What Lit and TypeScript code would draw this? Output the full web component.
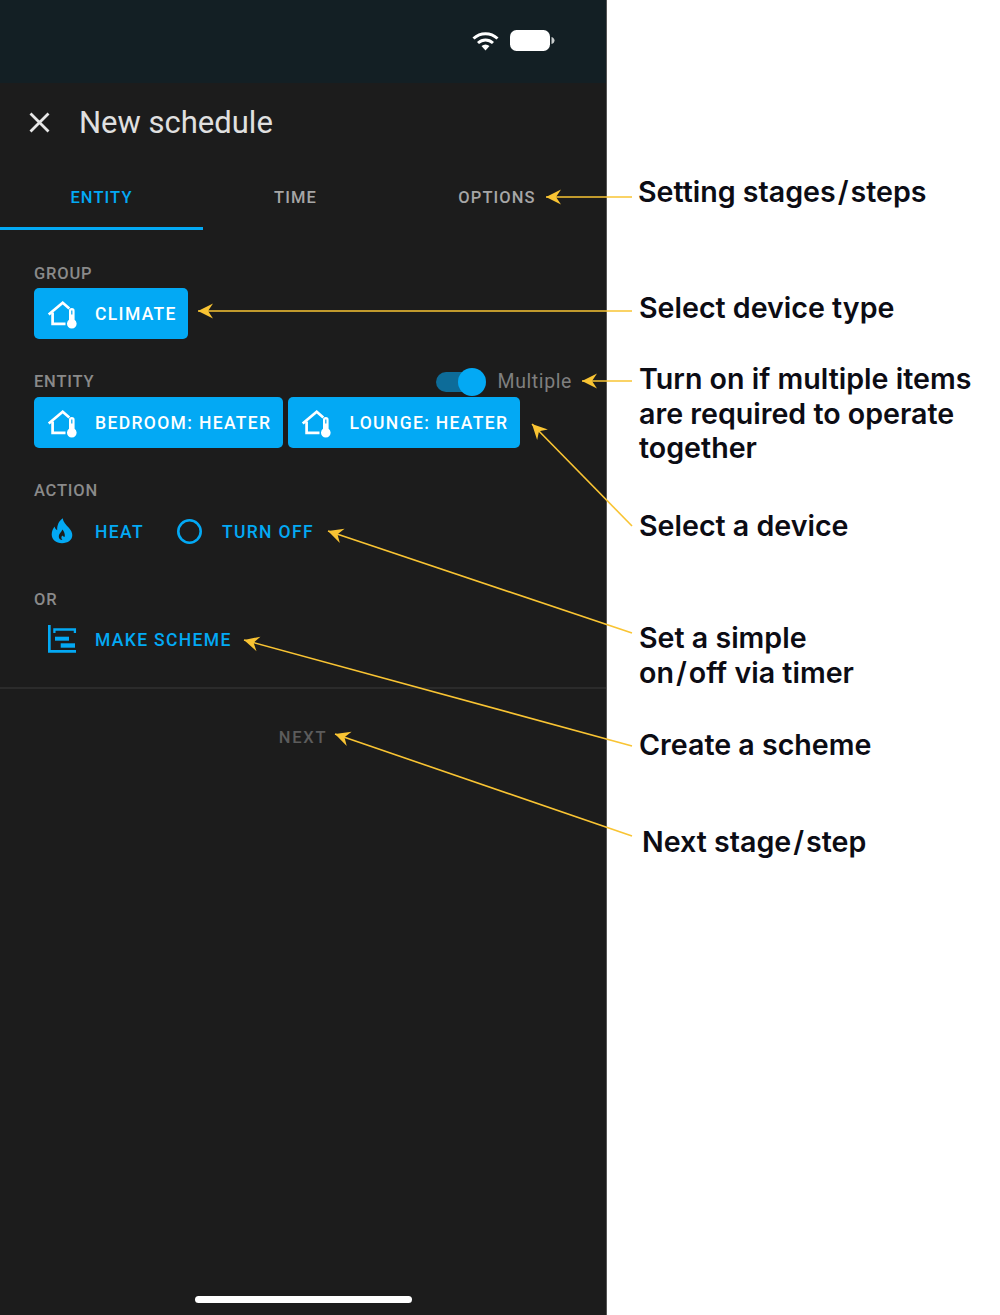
import { LitElement, html, css, svg } from 'lit';
import { customElement } from 'lit/decorators.js';

const climateIcon = svg`
  <path d="M2.7 16.5 L16.7 4.7 L23.3 10.4" fill="none" stroke="#fff" stroke-width="2.7"/>
  <path d="M6.6 14.5 V25.8 H19.5" fill="none" stroke="#fff" stroke-width="2.7"/>
  <path d="M23 21.8 V12.8 a2.8 2.8 0 0 1 5.6 0 V21.8 a4.8 4.8 0 1 1 -5.6 0 Z" fill="#fff"/>
  <rect x="25.2" y="12.5" width="1.2" height="4" fill="#03a9f4"/>
`;

const fireIcon = svg`
  <path fill-rule="evenodd" fill="#03a9f4" d="M16.7 2.2 C17.2 6.2 20 8.6 22.6 11.4 C25 14 26.3 16.4 26.3 19 C26.3 24 22 27.2 16 27.2 C10 27.2 5.7 23.6 5.7 18.6 C5.7 15.4 7 12.6 8.6 10.6 C8.9 12.4 9.8 13.6 11.2 14.2 C11 9.6 12.6 5 16.7 2.2 Z M16.4 13.6 C15.6 16 13 17.4 12.8 20 C12.6 22.4 14.2 24 16.4 24 C15 22.6 15 21 16.4 19.6 C17 20.6 18 21 18.8 20.8 C19.2 18 18 15.4 16.4 13.6 Z"/>
`;

const schemeIcon = svg`
  <path fill="#03a9f4" d="M2 1 H4.7 V26 H30 V28.7 H2 Z"/>
  <path fill="none" stroke="#03a9f4" stroke-width="2.3" d="M8.4 9 V5.5 H28.9 V9"/>
  <rect x="9" y="12.7" width="14" height="4" fill="#03a9f4"/>
  <rect x="14.7" y="19.3" width="14.3" height="4.4" fill="#03a9f4"/>
`;

const offIcon = svg`<circle cx="16.5" cy="15.5" r="11.2" fill="none" stroke="#03a9f4" stroke-width="2.6"/>`;

// from -> to, the head sits on the "to" end
const arrows = [
  [632, 197, 546, 197],
  [632, 311, 198, 311],
  [632, 381, 582, 381],
  [632, 526, 532, 424],
  [632, 633, 328, 531],
  [632, 746, 244, 640],
  [632, 836, 335, 734],
];

const callouts = [
  { x: 31, y: 175, lines: ['Setting stages/steps'] },
  { x: 32, y: 291, lines: ['Select device type'] },
  { x: 32, y: 362, lines: ['Turn on if multiple items', 'are required to operate', 'together'] },
  { x: 32, y: 509, lines: ['Select a device'] },
  { x: 32, y: 621, lines: ['Set a simple', 'on/off via timer'] },
  { x: 32, y: 728, lines: ['Create a scheme'] },
  { x: 35, y: 825, lines: ['Next stage/step'] },
];

function arrowHead(x1: number, y1: number, x2: number, y2: number) {
  const len = Math.hypot(x1 - x2, y1 - y2);
  const ux = (x1 - x2) / len;
  const uy = (y1 - y2) / len;
  const px = -uy;
  const py = ux;
  const pts = [
    [x2, y2],
    [x2 + ux * 15 + px * 7.5, y2 + uy * 15 + py * 7.5],
    [x2 + ux * 10, y2 + uy * 10],
    [x2 + ux * 15 - px * 7.5, y2 + uy * 15 - py * 7.5],
  ];
  return pts.map((p) => p.join(',')).join(' ');
}

@customElement('app-root')
export class AppRoot extends LitElement {
  static styles = css`
    :host {
      display: flex;
      position: relative;
      width: 1000px;
      height: 1315px;
      background: #fff;
      font-family: Roboto, sans-serif;
      overflow: hidden;
    }

    .phone {
      width: 607px;
      height: 1315px;
      background: #1c1c1c;
      display: flex;
      flex-direction: column;
      flex: none;
      border-right: 1px solid #555;
      box-sizing: border-box;
    }

    .status {
      height: 83px;
      background: #131f24;
      display: flex;
      align-items: center;
      justify-content: flex-end;
      gap: 11px;
      padding: 0 51px 2px 0;
      box-sizing: border-box;
      flex: none;
    }

    .status svg {
      display: block;
    }

    .title-bar {
      height: 79px;
      display: flex;
      align-items: center;
      padding-left: 27px;
      color: #e0e0e0;
      font-size: 31px;
      flex: none;
    }

    .title-bar svg {
      width: 25px;
      height: 25px;
      margin-right: 27px;
    }

    .tabs {
      display: grid;
      grid-template-columns: 203px 185px 1fr;
      height: 68px;
      flex: none;
    }

    .tab {
      display: flex;
      align-items: center;
      justify-content: center;
      color: #a6a6a6;
      font-size: 16.5px;
      font-weight: 500;
      letter-spacing: 1.1px;
      padding-top: 2px;
    }

    .tab.active {
      color: #03a9f4;
      box-shadow: inset 0 -3px 0 #03a9f4;
    }

    .content {
      padding: 33.3px 0 0 34px;
    }

    .section {
      margin-bottom: 33px;
    }

    .section-head {
      display: flex;
      align-items: center;
      justify-content: space-between;
      height: 20px;
      margin-bottom: 5px;
      padding-right: 34px;
    }

    .label {
      color: #8a8a8a;
      font-size: 16.5px;
      font-weight: 500;
      letter-spacing: 0.8px;
    }

    .multiple {
      display: flex;
      align-items: center;
      color: #7f7f7f;
      font-size: 19.5px;
      letter-spacing: 0.6px;
    }

    .multiple span {
      margin-bottom: 1px;
    }

    .toggle {
      position: relative;
      width: 42px;
      height: 20px;
      border-radius: 10px;
      background: #0d6c99;
      margin-right: 20px;
    }

    .knob {
      position: absolute;
      right: -8px;
      top: -4px;
      width: 28px;
      height: 28px;
      border-radius: 50%;
      background: #03a9f4;
    }

    .row {
      display: flex;
      gap: 5.5px;
    }

    .btn {
      display: flex;
      align-items: center;
      height: 50.7px;
      padding: 1px 11.5px 0 12px;
      border-radius: 5px;
      box-sizing: border-box;
      font-size: 17.5px;
      font-weight: 500;
      letter-spacing: 1.35px;
      color: #03a9f4;
    }

    .btn.on {
      background: #03a9f4;
      color: #fff;
    }

    .btn svg {
      width: 32px;
      height: 32px;
      margin-right: 17px;
      flex: none;
    }

    .divider {
      height: 2px;
      background: #2b2b2b;
      margin-top: -11px;
      flex: none;
    }

    .next {
      text-align: center;
      margin-top: 39px;
      color: #5c5c5c;
      font-size: 16.5px;
      font-weight: 500;
      letter-spacing: 1.7px;
      line-height: 20px;
    }

    .home-bar {
      margin: auto auto 12px;
      width: 217px;
      height: 7px;
      border-radius: 4px;
      background: #fff;
    }

    .notes {
      position: relative;
      flex: 1;
    }

    .note {
      position: absolute;
      font-family: Inter, sans-serif;
      font-size: 28.6px;
      font-weight: 600;
      line-height: 34.5px;
      color: #0c0c14;
      white-space: nowrap;
    }

    .slash {
      margin: 0 2px;
    }

    .arrows {
      position: absolute;
      left: 0;
      top: 0;
      pointer-events: none;
    }
  `;

  private icon(body: unknown) {
    return html`<svg viewBox="0 0 32 32">${body}</svg>`;
  }

  // the slash in the callout font is wider than Inter's
  private noteLine(line: string) {
    const parts = line.split('/');
    if (parts.length === 1) return html`<div>${line}</div>`;
    return html`<div>${parts[0]}<span class="slash">/</span>${parts[1]}</div>`;
  }

  render() {
    return html`
      <div class="phone">
        <div class="status">
          <svg width="27" height="20" viewBox="0 0 27 20">
            <path d="M1.5 7.5 C8.5 1 18.5 1 25.5 7.5" fill="none" stroke="#fff" stroke-width="3"/>
            <path d="M6 12 C10.5 8 16.5 8 21 12" fill="none" stroke="#fff" stroke-width="3"/>
            <path d="M9.5 15 C12 13 15 13 17.5 15 L13.5 19.5 Z" fill="#fff"/>
          </svg>
          <svg width="45" height="21" viewBox="0 0 45 21">
            <rect x="0" y="0" width="40" height="21" rx="6.5" fill="#fff"/>
            <path d="M41.5 7 C43.5 7.5 44.5 9 44.5 10.5 C44.5 12 43.5 13.5 41.5 14 Z" fill="#c8cccd"/>
          </svg>
        </div>

        <div class="title-bar">
          <svg viewBox="0 0 25 25">
            <path d="M3.5 3.5 L21.5 21.5 M21.5 3.5 L3.5 21.5" stroke="#e8e8e8" stroke-width="2.8" fill="none"/>
          </svg>
          New schedule
        </div>

        <div class="tabs">
          <div class="tab active">ENTITY</div>
          <div class="tab">TIME</div>
          <div class="tab">OPTIONS</div>
        </div>

        <div class="content">
          <div class="section">
            <div class="section-head"><span class="label">GROUP</span></div>
            <div class="row">
              <div class="btn on">${this.icon(climateIcon)}CLIMATE</div>
            </div>
          </div>

          <div class="section">
            <div class="section-head">
              <span class="label">ENTITY</span>
              <div class="multiple">
                <div class="toggle"><div class="knob"></div></div>
                <span>Multiple</span>
              </div>
            </div>
            <div class="row">
              <div class="btn on">${this.icon(climateIcon)}BEDROOM: HEATER</div>
              <div class="btn on">${this.icon(climateIcon)}LOUNGE: HEATER</div>
            </div>
          </div>

          <div class="section">
            <div class="section-head"><span class="label">ACTION</span></div>
            <div class="row">
              <div class="btn">${this.icon(fireIcon)}HEAT</div>
              <div class="btn">${this.icon(offIcon)}TURN OFF</div>
            </div>
          </div>

          <div class="section">
            <div class="section-head"><span class="label">OR</span></div>
            <div class="row">
              <div class="btn">${this.icon(schemeIcon)}MAKE SCHEME</div>
            </div>
          </div>
        </div>

        <div class="divider"></div>
        <div class="next">NEXT</div>
        <div class="home-bar"></div>
      </div>

      <div class="notes">
        ${callouts.map((c) => html`
          <div class="note" style="left:${c.x}px;top:${c.y}px">
            ${c.lines.map((line) => this.noteLine(line))}
          </div>
        `)}
      </div>

      <svg class="arrows" width="1000" height="1315">
        ${arrows.map(([x1, y1, x2, y2]) => svg`
          <line x1=${x1} y1=${y1} x2=${x2} y2=${y2} stroke="#f9c433" stroke-width="1.6"/>
          <polygon points=${arrowHead(x1, y1, x2, y2)} fill="#f9c433"/>
        `)}
      </svg>
    `;
  }
}
